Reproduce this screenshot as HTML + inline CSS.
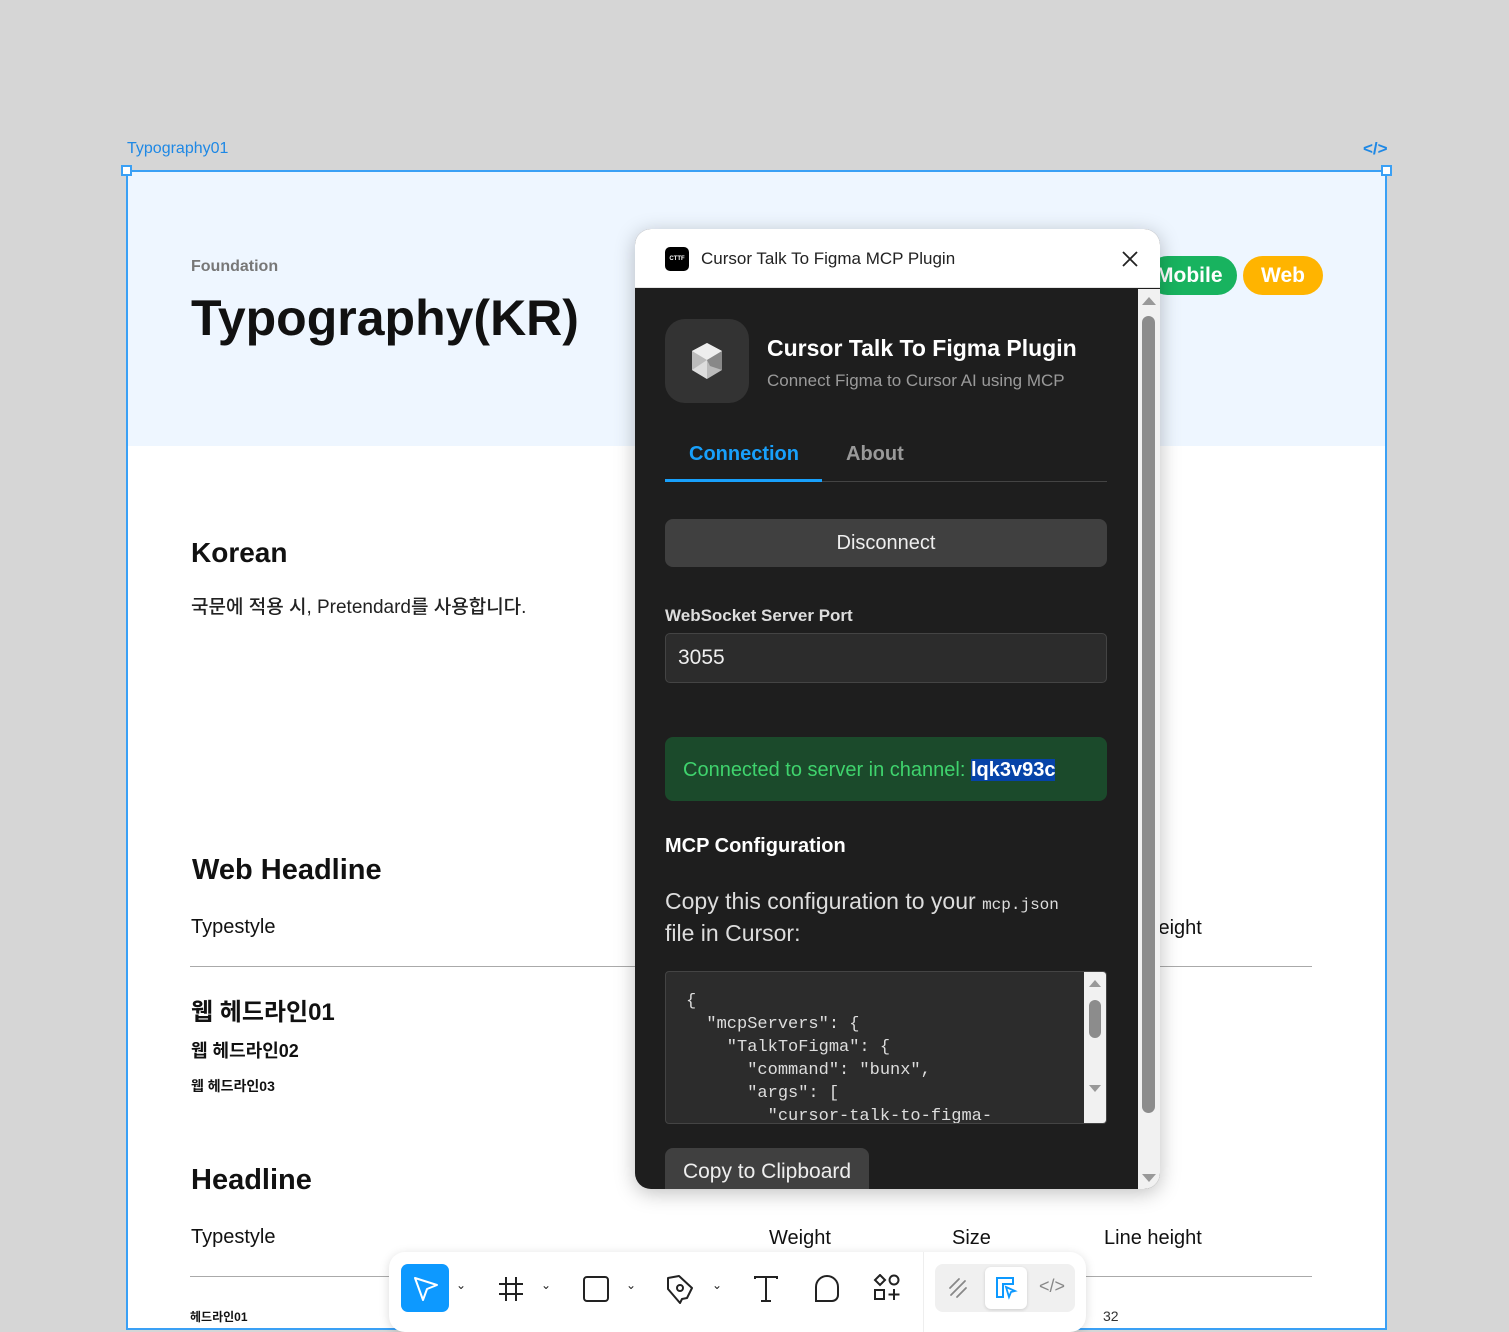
<!DOCTYPE html>
<html><head><meta charset="utf-8"><style>
*{margin:0;padding:0;box-sizing:border-box}
body{width:1509px;height:1321px;background:#d6d6d6;position:relative;overflow:hidden;font-family:"Liberation Sans","Noto Sans CJK KR",sans-serif}
.a{position:absolute;white-space:nowrap}
.k{font-family:"Liberation Sans","Noto Sans CJK KR",sans-serif}
</style></head><body>
<div class="a" style="left:127px;top:140px;font-size:16px;color:#1e88e5">Typography01</div>
<div class="a" style="left:1363px;top:139px;font-size:17px;color:#1e88e5;font-weight:bold">&lt;/&gt;</div>
<div class="a" style="left:126px;top:170px;width:1261px;height:1160px;background:#fff;border:2px solid #3aa0f5"></div>
<div class="a" style="left:128px;top:172px;width:1257px;height:274px;background:#eef6ff"></div>
<div class="a" style="left:121px;top:165px;width:11px;height:11px;background:#fff;border:2px solid #3aa0f5"></div>
<div class="a" style="left:1381px;top:165px;width:11px;height:11px;background:#fff;border:2px solid #3aa0f5"></div>

<div class="a" style="left:191px;top:258px;font-size:16px;color:#777;font-weight:bold">Foundation</div>
<div class="a" style="left:191px;top:289px;font-size:50px;color:#111;font-weight:bold;letter-spacing:0px">Typography(KR)</div>
<div class="a" style="left:1148px;top:256px;width:89px;height:39px;border-radius:20px;background:#18b35f;color:#fff;font-size:21px;font-weight:bold;line-height:39px;padding-left:8px">Mobile</div>
<div class="a" style="left:1243px;top:256px;width:80px;height:39px;border-radius:20px;background:#ffb400;color:#fff;font-size:21px;font-weight:bold;line-height:39px;text-align:center">Web</div>

<div class="a" style="left:191px;top:537px;font-size:28px;color:#111;font-weight:bold">Korean</div>
<div class="a k" style="left:191px;top:592px;font-size:19px;color:#222;font-weight:500">국문에 적용 시, Pretendard를 사용합니다.</div>

<div class="a" style="left:192px;top:854px;font-size:29px;color:#111;font-weight:bold">Web Headline</div>
<div class="a" style="left:191px;top:916px;font-size:20px;color:#111">Typestyle</div>
<div class="a" style="left:1104px;top:917px;font-size:20px;color:#111">Line height</div>
<div class="a" style="left:190px;top:966px;width:1122px;height:1px;background:#aaa"></div>
<div class="a k" style="left:191px;top:992px;font-size:24px;color:#111;font-weight:bold">웹 헤드라인01</div>
<div class="a k" style="left:191px;top:1037px;font-size:18px;color:#111;font-weight:bold">웹 헤드라인02</div>
<div class="a k" style="left:191px;top:1076px;font-size:14px;color:#111;font-weight:bold">웹 헤드라인03</div>

<div class="a" style="left:191px;top:1164px;font-size:29px;color:#111;font-weight:bold">Headline</div>
<div class="a" style="left:191px;top:1226px;font-size:20px;color:#111">Typestyle</div>
<div class="a" style="left:769px;top:1227px;font-size:20px;color:#111">Weight</div>
<div class="a" style="left:952px;top:1227px;font-size:20px;color:#111">Size</div>
<div class="a" style="left:1104px;top:1227px;font-size:20px;color:#111">Line height</div>
<div class="a" style="left:190px;top:1276px;width:1122px;height:1px;background:#aaa"></div>
<div class="a k" style="left:190px;top:1308px;font-size:12px;color:#111;font-weight:bold">헤드라인01</div>
<div class="a" style="left:1103px;top:1308px;font-size:14px;color:#333">32</div>

<div class="a" style="left:635px;top:229px;width:525px;height:960px;border-radius:16px;overflow:hidden;background:#1e1e1e;box-shadow:0 4px 20px rgba(0,0,0,.25)">
 <div class="a" style="left:0;top:0;width:525px;height:59px;background:#fff;border-bottom:1px solid #e5e5e5"></div>
 <div class="a" style="left:30px;top:18px;width:24px;height:24px;border-radius:5px;background:#000;color:#fff;font-size:6px;font-weight:bold;line-height:24px;text-align:center">CTTF</div>
 <div class="a" style="left:66px;top:20px;font-size:17px;color:#222">Cursor Talk To Figma MCP Plugin</div>
 <svg class="a" style="left:486px;top:21px" width="18" height="18"><path d="M2 2L16 16M16 2L2 16" stroke="#222" stroke-width="1.8"/></svg>
 <div class="a" style="left:503px;top:60px;width:22px;height:900px;background:#f1f1f1"></div>
 <div class="a" style="left:507px;top:87px;width:13px;height:797px;border-radius:7px;background:#8c8c8c"></div>
 <svg class="a" style="left:506px;top:66px" width="16" height="12"><path d="M1 10L8 2L15 10Z" fill="#999"/></svg>
 <svg class="a" style="left:506px;top:943px" width="16" height="12"><path d="M1 2L8 10L15 2Z" fill="#999"/></svg>

 <div class="a" style="left:30px;top:90px;width:84px;height:84px;border-radius:20px;background:#333"></div>
 <svg class="a" style="left:55px;top:113px" width="34" height="38"><path d="M17 1L32 9L32 28L17 37L2 28L2 9Z" fill="#bbb"/><path d="M17 1L32 9L17 18L2 9Z" fill="#eee"/><path d="M17 18L32 9L32 28L20 24Z" fill="#888"/><path d="M2 28L17 37L17 18Z" fill="#ddd"/></svg>
 <div class="a" style="left:132px;top:106px;font-size:23px;font-weight:bold;color:#fff">Cursor Talk To Figma Plugin</div>
 <div class="a" style="left:132px;top:142px;font-size:17px;color:#9a9a9a">Connect Figma to Cursor AI using MCP</div>

 <div class="a" style="left:54px;top:214px;font-size:20px;font-weight:bold;color:#18a0fb">Connection</div>
 <div class="a" style="left:211px;top:214px;font-size:20px;font-weight:bold;color:#999">About</div>
 <div class="a" style="left:30px;top:252px;width:442px;height:1px;background:#444"></div>
 <div class="a" style="left:30px;top:250px;width:157px;height:3px;background:#18a0fb"></div>

 <div class="a" style="left:30px;top:290px;width:442px;height:48px;border-radius:8px;background:#404040;color:#eee;font-size:20px;line-height:48px;text-align:center">Disconnect</div>
 <div class="a" style="left:30px;top:377px;font-size:17px;font-weight:bold;color:#ddd">WebSocket Server Port</div>
 <div class="a" style="left:30px;top:404px;width:442px;height:50px;border-radius:5px;background:#2c2c2c;border:1px solid #444;color:#eee;font-size:21px;line-height:48px;padding-left:12px">3055</div>
 <div class="a" style="left:30px;top:508px;width:442px;height:64px;border-radius:8px;background:#1b4a2b"></div>
 <div class="a" style="left:48px;top:530px;font-size:20px;color:#3fd36d">Connected to server in channel: <span style="background:#0643a8;color:#fff;font-weight:bold">lqk3v93c</span></div>
 <div class="a" style="left:30px;top:606px;font-size:20px;font-weight:bold;color:#fff">MCP Configuration</div>
 <div class="a" style="left:30px;top:659px;font-size:23px;color:#ddd">Copy this configuration to your <span style="font-family:'Liberation Mono',monospace;font-size:16px">mcp.json</span></div>
 <div class="a" style="left:30px;top:691px;font-size:23px;color:#ddd">file in Cursor:</div>
 <div class="a" style="left:30px;top:742px;width:442px;height:153px;border-radius:4px;background:#2c2c2c;border:1px solid #444;overflow:hidden">
  <pre style="position:absolute;left:20px;top:18px;font-family:'Liberation Mono',monospace;font-size:17px;line-height:23px;color:#ddd">{
  "mcpServers": {
    "TalkToFigma": {
      "command": "bunx",
      "args": [
        "cursor-talk-to-figma-</pre>
  <div class="a" style="left:418px;top:0;width:23px;height:152px;background:#f1f1f1"></div>
  <svg class="a" style="left:422px;top:6px" width="14" height="10"><path d="M1 9L7 2L13 9Z" fill="#999"/></svg>
  <div class="a" style="left:423px;top:28px;width:12px;height:38px;border-radius:6px;background:#8c8c8c"></div>
  <svg class="a" style="left:422px;top:112px" width="14" height="10"><path d="M1 1L7 8L13 1Z" fill="#999"/></svg>
 </div>
 <div class="a" style="left:30px;top:919px;width:204px;height:50px;border-radius:8px;background:#404040;color:#eee;font-size:21px;line-height:48px;text-align:center">Copy to Clipboard</div>
</div>

<div class="a" style="left:389px;top:1252px;width:697px;height:80px;border-radius:16px;background:#fff;box-shadow:0 2px 10px rgba(0,0,0,.15)">
 <div class="a" style="left:12px;top:12px;width:48px;height:48px;border-radius:7px;background:#0d99ff"></div>
 <svg class="a" style="left:22px;top:22px" width="30" height="30"><path d="M4 4L26 11L16 15L12 26Z" fill="none" stroke="#fff" stroke-width="2" stroke-linejoin="round"/></svg>
 <div class="a" style="left:67px;top:26px;font-size:12px;color:#222">⌄</div>
 <svg class="a" style="left:108px;top:23px" width="28" height="28"><path d="M9 2V26M19 2V26M2 9H26M2 19H26" stroke="#222" stroke-width="2"/></svg>
 <div class="a" style="left:152px;top:26px;font-size:12px;color:#222">⌄</div>
 <svg class="a" style="left:193px;top:23px" width="28" height="28"><rect x="2" y="2" width="24" height="24" rx="3" fill="none" stroke="#222" stroke-width="2"/></svg>
 <div class="a" style="left:237px;top:26px;font-size:12px;color:#222">⌄</div>
 <svg class="a" style="left:276px;top:22px" width="30" height="30"><path d="M3 4L14 2L27 14L22 24L17 25L15 29L3 15Z" fill="none" stroke="#222" stroke-width="2" stroke-linejoin="round"/><circle cx="15" cy="14" r="3" fill="none" stroke="#222" stroke-width="2"/></svg>
 <div class="a" style="left:323px;top:26px;font-size:12px;color:#222">⌄</div>
 <svg class="a" style="left:364px;top:23px" width="26" height="28"><path d="M2 4V2H24V4M13 2V26M8 26H18" fill="none" stroke="#222" stroke-width="2"/></svg>
 <svg class="a" style="left:424px;top:23px" width="28" height="28"><path d="M3 26V12A10 10 0 0 1 25 12V20A6 6 0 0 1 19 26Z" fill="none" stroke="#222" stroke-width="2"/></svg>
 <svg class="a" style="left:484px;top:22px" width="28" height="28"><path d="M7 1L12 6L7 11L2 6Z M2 16H11V25H2Z" fill="none" stroke="#222" stroke-width="2"/><circle cx="21" cy="6" r="4.5" fill="none" stroke="#222" stroke-width="2"/><path d="M21 15V26M15.5 20.5H26.5" stroke="#222" stroke-width="2"/></svg>
 <div class="a" style="left:534px;top:0;width:1px;height:80px;background:#eee"></div>
 <div class="a" style="left:546px;top:12px;width:140px;height:48px;border-radius:8px;background:#f0f0f0"></div>
 <svg class="a" style="left:558px;top:24px" width="24" height="24"><path d="M3 12L12 3M4 19L18 5M10 21L19 12" stroke="#888" stroke-width="1.8" stroke-linecap="round"/></svg>
 <div class="a" style="left:596px;top:15px;width:42px;height:42px;border-radius:6px;background:#fff;box-shadow:0 1px 3px rgba(0,0,0,.15)"></div>
 <svg class="a" style="left:605px;top:24px" width="24" height="24"><path d="M3 2H19V8H9V21H3Z" fill="none" stroke="#0d99ff" stroke-width="2"/><path d="M12 11L21 15L17 16L15 21Z" fill="none" stroke="#0d99ff" stroke-width="1.8"/></svg>
 <div class="a" style="left:650px;top:24px;font-size:18px;color:#888">&lt;/&gt;</div>
</div>
</body></html>
